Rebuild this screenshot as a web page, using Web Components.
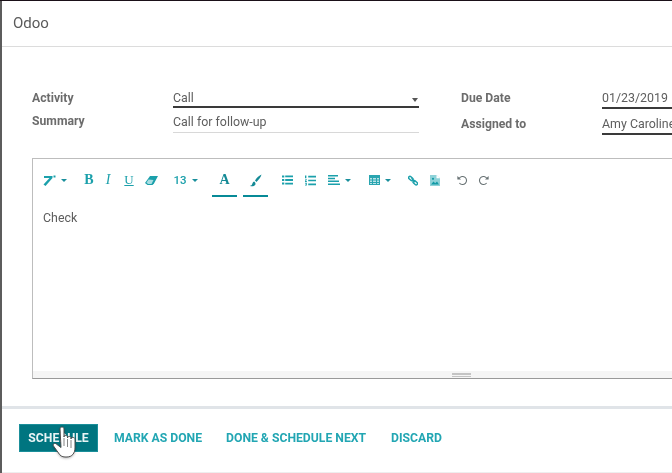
<!DOCTYPE html>
<html>
<head>
<meta charset="utf-8">
<title>Odoo</title>
<style>
  html, body { margin: 0; padding: 0; height: 100%; overflow: hidden; }
  body { background: linear-gradient(#1a1018 1px, #5c5c5c 1px); font-family: Roboto, "Liberation Sans", sans-serif; color: #555; }
</style>
</head>
<body>
<template id="dialog-tpl">
  <style>
    :host { display: flex; flex-direction: column; position: relative; margin: 1px 0 0 2px; height: 472px; background: #fff; overflow: hidden; filter: blur(.45px); }
    header { height: 45px; flex: none; border-bottom: 1px solid #dcdcdc; padding-left: 11px; font-size: 15px; line-height: 44px; color: #5a5a5a; }
    main { flex: 1; padding: 41px 0 0 30px; }
    footer { flex: none; height: 67px; border-top: 3px solid #e0e4e8; border-bottom: 1px solid #eee; display: flex; align-items: flex-start; padding: 15px 0 0 17px; box-sizing: border-box; }
  </style>
  <header><slot name="title"></slot></header>
  <main><slot></slot></main>
  <footer><slot name="actions"></slot></footer>
</template>

<template id="form-tpl">
  <style>
    :host { display: grid; grid-template-columns: 387px 400px; column-gap: 42px; height: 70px; width: 830px; }
    .col { display: flex; flex-direction: column; }
  </style>
  <div class="col"><slot name="left"></slot></div>
  <div class="col"><slot name="right"></slot></div>
</template>

<template id="field-tpl">
  <style>
    :host { display: grid; grid-template-columns: 141px 1fr; font-size: 12.2px; box-sizing: border-box; height: var(--h, 20px); margin-top: var(--mt, 0); }
    .label { font-weight: 700; color: #6c6c6c; line-height: 20px; margin-top: var(--lt, 0); }
    .value { position: relative; font-size: 12.4px; color: #5e5e5e; line-height: 20px; border-bottom: 2px solid #3a3a3a; white-space: nowrap; overflow: hidden; }
    :host([light]) .value { border-bottom: 1px solid #d8d8d8; }
    .caret { position: absolute; right: 1px; top: 10px; width: 0; height: 0; border: 3.5px solid transparent; border-top: 4px solid #555; border-bottom: 0; }
    :host(:not([select])) .caret { display: none; }
  </style>
  <div class="label"><slot name="label"></slot></div>
  <div class="value"><slot></slot><span class="caret"></span></div>
</template>

<template id="editor-tpl">
  <style>
    :host { display: flex; flex-direction: column; box-sizing: border-box; width: 900px; height: 221px; border: 1px solid #bdbdbd; border-bottom-color: #999; background: #fff; }
    .tools { flex: none; height: 42px; }
    .text { flex: 1; padding: 8px 10px; font-size: 12.4px; line-height: 18px; color: #5e5e5e; }
    .grip { flex: none; height: 7px; background: #f5f5f5; position: relative; }
    .grip i { position: absolute; left: 419px; top: 1.5px; width: 19px; height: 4px; border-top: 1px solid #c4c4c4; border-bottom: 1px solid #c4c4c4; box-sizing: border-box; }
    .grip i::after { content: ""; display: block; margin-top: .5px; height: 1px; background: #c4c4c4; }
  </style>
  <div class="tools"><slot name="toolbar"></slot></div>
  <div class="text"><slot></slot></div>
  <div class="grip"><i></i></div>
</template>

<template id="toolbar-tpl">
  <style>
    :host { display: flex; align-items: flex-start; height: 42px; color: #1ba0ab; }
    ::slotted(*) { flex: none; }
  </style>
  <slot></slot>
</template>

<template id="tool-tpl">
  <style>
    :host { display: flex; align-items: center; justify-content: center; box-sizing: border-box; height: 18px; margin-top: 12px; font-size: 12px; color: #1ba0ab; position: relative; }
    ::slotted(svg) { display: block; fill: currentColor; }
    :host([bar])::after { content: ""; position: absolute; left: 0; right: 0; top: 24px; height: 2px; background: #078a97; }
    .caret { display: none; width: 0; height: 0; border: 3px solid transparent; border-top: 3px solid #1a8f9c; border-bottom: 0; margin-left: 5px; }
    :host([caret]) .caret { display: block; }
  </style>
  <slot></slot><span class="caret"></span>
</template>

<template id="button-tpl">
  <style>
    :host { display: block; font-size: 12.2px; font-weight: 700; line-height: 28px; height: 28px; white-space: nowrap; color: #22a6b3; margin-right: var(--gap, 0); }
    :host([primary]) { background: #007580; color: #e8f4f5; width: 79px; text-align: center; box-shadow: inset 0 0 0 1px #1b8f9a; }
  </style>
  <slot></slot>
</template>

<template id="hand-tpl">
  <style>
    :host { display: block; position: absolute; left: 50px; top: 424px; width: 30px; height: 36px; filter: blur(.4px) drop-shadow(0 1px 1px rgba(0,0,0,.25)); }
    svg { display: block; }
  </style>
  <svg width="30" height="36" viewBox="0 0 30 36">
    <path d="M10 5c0-2.600 4-2.600 4 0v8c0-2 3.500-2 3.500 0v1c0-2 3.500-2 3.500 0v1c0-2 4-2 4 0v9c0 5-3 9-8 9h-2c-3 0-5-1.500-6.500-4l-5-7c-1.200-2 1.200-3.500 2.800-2l4.700 3.500z" fill="#fff" stroke="#4a4a4a" stroke-width="1" stroke-linejoin="round"/>
    <path d="M14 14v8M17.500 15v8M21 16v8" stroke="#777" stroke-width=".9" fill="none"/>
  </svg>
</template>

<script>
  // every element just clones its template into an open shadow root
  function define(name, tplId) {
    customElements.define(name, class extends HTMLElement {
      constructor() {
        super();
        const shadowDom = this.attachShadow({ mode: "open" });
        shadowDom.appendChild(document.getElementById(tplId).content.cloneNode(true));
      }
    });
  }
  define("odoo-dialog", "dialog-tpl");
  define("activity-form", "form-tpl");
  define("form-field", "field-tpl");
  define("rich-editor", "editor-tpl");
  define("editor-toolbar", "toolbar-tpl");
  define("tool-button", "tool-tpl");
  define("odoo-button", "button-tpl");
  define("hand-cursor", "hand-tpl");
</script>

<odoo-dialog>
  <span slot="title">Odoo</span>

  <activity-form>
    <form-field slot="left" select style="--h:20px">
      <span slot="label">Activity</span>Call
    </form-field>
    <form-field slot="left" light style="--h:21px;--mt:4px;--lt:-1px">
      <span slot="label">Summary</span>Call for follow-up
    </form-field>
    <form-field slot="right" style="--h:21px">
      <span slot="label">Due Date</span>01/23/2019
    </form-field>
    <form-field slot="right" style="--h:21px;--mt:5px">
      <span slot="label">Assigned to</span>Amy Caroline
    </form-field>
  </activity-form>

  <rich-editor>
    <editor-toolbar slot="toolbar">
      <tool-button caret style="margin-left:10px;width:24px">
        <svg width="13" height="11" viewBox="0 0 13 11"><path d="M1 1h8.500v2L2.500 11 .5 9.500 6.500 3H1z"/><path d="M10.500 .5h2v2h-2z"/></svg>
      </tool-button>
      <tool-button style="margin-left:17px;width:10px;font:700 14px 'Liberation Serif',serif">B</tool-button>
      <tool-button style="margin-left:11px;width:6px;font:italic 400 14px 'Liberation Serif',serif">I</tool-button>
      <tool-button style="margin-left:13px;width:10px;font:400 13px 'Liberation Serif',serif;text-decoration:underline">U</tool-button>
      <tool-button style="margin-left:11px;width:13px">
        <svg width="13" height="9" viewBox="0 0 13 9"><path d="M5 0h8L9 7.500 7.500 9H2.500L0 7z"/><path d="M3.500 3.500l5 .5L6.500 8h-3.500L1.500 6.500z" fill="#a8dde2"/></svg>
      </tool-button>
      <tool-button caret style="margin-left:16px;width:23px;font-size:11.500px;font-weight:500">13</tool-button>
      <tool-button bar style="margin-left:15px;width:25px;font:700 14px 'Liberation Serif',serif;color:#148a96">A</tool-button>
      <tool-button bar style="margin-left:6px;width:25px">
        <svg width="13" height="13" viewBox="0 0 13 13"><path d="M12.500.5c-2 .8-5 3.500-6.500 6l1.500 1.500C9.500 6 12 3 12.500.5zM5.200 7.600C3.500 8 3.500 10 2.800 11c-.4.500-1.300.8-2 .8 1.500.8 4.200.8 5.300-.8.600-.9.500-2 0-2.600z" fill="#148a96"/></svg>
      </tool-button>
      <tool-button style="margin-left:14px;width:11px">
        <svg width="12" height="10" viewBox="0 0 12 10"><path d="M0 0h2.500v2.200H0zM3.500 0H12v2H3.500zM0 3.900h2.500v2.200H0zM3.500 4H12v2H3.500zM0 7.800h2.500V10H0zM3.500 8H12v2H3.500z"/></svg>
      </tool-button>
      <tool-button style="margin-left:12px;width:11px">
        <svg width="12" height="11" viewBox="0 0 12 11"><path d="M0 0h1.500v3H0zM0 4h2v.8L1 6h1v1H0V6l1-1.300H0zM0 8h2v3H0v-.8h1.200v-.5H.5V9h.7v-.3H0zM3.500.400H12V2.200H3.500zM3.500 4.600H12v1.800H3.500zM3.500 8.800H12v1.800H3.500z"/></svg>
      </tool-button>
      <tool-button caret style="margin-left:12px;width:23px">
        <svg width="12" height="10" viewBox="0 0 12 10"><path d="M0 0h10v1.500H0zM0 2.800h7v1.500H0zM0 5.600h11v1.500H0zM0 8.400h12V10H0z"/></svg>
      </tool-button>
      <tool-button caret style="margin-left:18px;width:22px">
        <svg width="11" height="10" viewBox="0 0 11 10"><path d="M0 0h11v10H0z" fill="#2aa5b0"/><path d="M1 3h2v1.500H1zm3 0h3v1.500H4zm4 0h2v1.500H8zM1 5.500h2V7H1zm3 0h3V7H4zm4 0h2V7H8zM1 8h2v1H1zm3 0h3v1H4zm4 0h2v1H8z" fill="#b9e3e7"/></svg>
      </tool-button>
      <tool-button style="margin-left:17px;width:10px">
        <svg width="11" height="11" viewBox="0 0 11 11"><g fill="none" stroke="currentColor" stroke-width="1.600"><rect x="-2.200" y="-1.400" width="5.500" height="3" rx="1.500" transform="translate(2.800 2.800) rotate(42)"/><rect x="-2.700" y="-1.600" width="5.500" height="3" rx="1.500" transform="translate(7.900 8) rotate(42)"/></g><path d="M3.800 3.200l4 4.200" stroke="currentColor" stroke-width="1.300"/></svg>
      </tool-button>
      <tool-button style="margin-left:11px;width:11px">
        <svg width="10" height="11" viewBox="0 0 10 11"><path d="M0 0h6.500L10 3.200V11H0z" fill="#8ed2d8"/><path d="M1 9.500l2.500-3 1.700 1.700L7 6.500l2 3z" fill="#129aa6"/><circle cx="3" cy="3.800" r="1.100" fill="#129aa6"/><path d="M6.500 0v3.200H10z" fill="#fff"/></svg>
      </tool-button>
      <tool-button style="margin-left:17px;width:11px;color:#667072">
        <svg width="11" height="11" viewBox="0 0 11 11"><path d="M2.200 3.300A4 4 0 1 1 2.400 8" fill="none" stroke="currentColor" stroke-width="1.100"/><path d="M.4 1v3.600H4z"/></svg>
      </tool-button>
      <tool-button style="margin-left:10px;width:11px;color:#667072">
        <svg width="11" height="11" viewBox="0 0 11 11"><path d="M8.800 3.300A4 4 0 1 0 8.600 8" fill="none" stroke="currentColor" stroke-width="1.100"/><path d="M10.600 1v3.600H7z"/></svg>
      </tool-button>
    </editor-toolbar>
    Check
  </rich-editor>

  <odoo-button slot="actions" primary style="--gap:16px">SCHEDULE</odoo-button>
  <odoo-button slot="actions" style="--gap:24px">MARK AS DONE</odoo-button>
  <odoo-button slot="actions" style="--gap:25px">DONE &amp; SCHEDULE NEXT</odoo-button>
  <odoo-button slot="actions">DISCARD</odoo-button>
</odoo-dialog>
<hand-cursor></hand-cursor>
</body>
</html>
